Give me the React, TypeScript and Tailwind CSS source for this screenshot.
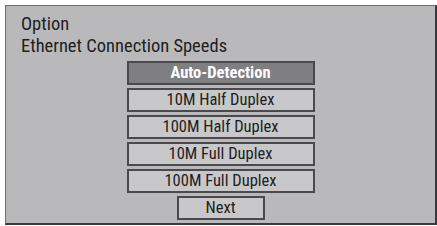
import React from 'react';

const options = ['Auto-Detection', '10M Half Duplex', '100M Half Duplex', '10M Full Duplex', '100M Full Duplex'];

export default function App() {
  const selected = 0;

  return (
    <div className="w-[437px] h-[226px] bg-white pl-[5px] pt-[5px]" style={{ fontFamily: '"Roboto Condensed", "Liberation Sans", Arial, sans-serif' }}>
      <div className="h-[220px] bg-[#b9b9bc] border-t border-l border-[#6e6e70] border-r-2 border-r-[#3a3a3c] border-b-2 border-b-[#3a3a3c] flex flex-col">
        <div className="pl-[15px] pt-[7px] text-[18.5px] leading-[22px] text-[#1e1e20]">
          <div>Option</div>
          <div>Ethernet Connection Speeds</div>
        </div>
        <div className="flex flex-col items-center gap-[3px] mt-[4px]">
          {options.map((o, i) => (
            <div
              key={o}
              className={`w-[188px] h-[24px] flex items-center justify-center text-[16.5px] border-2 ${
                i === selected
                  ? 'bg-[#7f7f82] border-[#4a4a4c] text-white font-bold'
                  : 'bg-[#c8c8cb] border-[#4a4a4c] text-[#1e1e20]'
              }`}
            >
              {o}
            </div>
          ))}
          <div className="w-[88px] h-[24px] flex items-center justify-center text-[16.5px] border-2 border-[#4a4a4c] bg-[#c8c8cb] text-[#1e1e20]">
            Next
          </div>
        </div>
      </div>
    </div>
  );
}
